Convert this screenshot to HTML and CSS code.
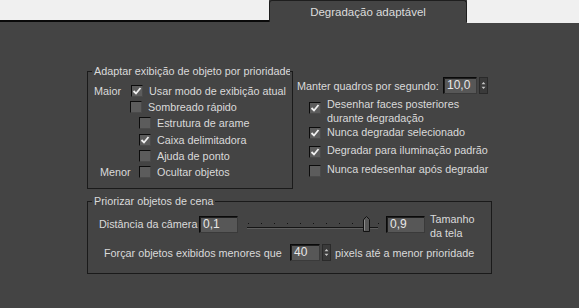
FILE: index.html
```html
<!DOCTYPE html>
<html lang="pt">
<head>
<meta charset="utf-8">
<link rel="stylesheet" href="styles.css">
</head>
<body>
<div class="tabbar">
  <div class="tab-left"></div>
  <div class="tab">Degradação adaptável</div>
  <div class="tab-right"></div>
</div>
<div class="content">
  <div class="top-row">
    <div class="group g1">
      <div class="legend legend1"><span>Adaptar exibição de objeto por prioridade</span></div>
      <div class="row r-first">
        <span class="side side-maior">Maior</span>
        <span class="cb on"><svg viewBox="0 0 12 12"><polyline points="2.5,6 5,8.5 9.5,3" /></svg></span>
        <span class="lbl">Usar modo de exibição atual</span>
      </div>
      <div class="row lvl1">
        <span class="cb"></span>
        <span class="lbl">Sombreado rápido</span>
      </div>
      <div class="row lvl2">
        <span class="cb"></span>
        <span class="lbl">Estrutura de arame</span>
      </div>
      <div class="row lvl2 r-gap">
        <span class="cb on"><svg viewBox="0 0 12 12"><polyline points="2.5,6 5,8.5 9.5,3" /></svg></span>
        <span class="lbl">Caixa delimitadora</span>
      </div>
      <div class="row lvl2">
        <span class="cb"></span>
        <span class="lbl">Ajuda de ponto</span>
      </div>
      <div class="row">
        <span class="side side-menor">Menor</span>
        <span class="cb"></span>
        <span class="lbl">Ocultar objetos</span>
      </div>
    </div>
    <div class="right-col">
      <div class="fps-row">
        <span class="fps-lbl">Manter quadros por segundo:</span>
        <span class="input fps-input">10,0</span>
        <span class="spin"><svg viewBox="0 0 9 17"><polygon points="4.5,4 7,7 2,7" /><polygon points="2,10 7,10 4.5,13" /></svg></span>
      </div>
      <div class="rcb rcb-two">
        <span class="cb on"><svg viewBox="0 0 12 12"><polyline points="2.5,6 5,8.5 9.5,3" /></svg></span>
        <span class="lbl">Desenhar faces posteriores<br>durante degradação</span>
      </div>
      <div class="rcb rcb-a">
        <span class="cb on"><svg viewBox="0 0 12 12"><polyline points="2.5,6 5,8.5 9.5,3" /></svg></span>
        <span class="lbl">Nunca degradar selecionado</span>
      </div>
      <div class="rcb rcb-b">
        <span class="cb on"><svg viewBox="0 0 12 12"><polyline points="2.5,6 5,8.5 9.5,3" /></svg></span>
        <span class="lbl">Degradar para iluminação padrão</span>
      </div>
      <div class="rcb rcb-b">
        <span class="cb"></span>
        <span class="lbl">Nunca redesenhar após degradar</span>
      </div>
    </div>
  </div>
  <div class="group g2">
    <div class="legend legend2"><span>Priorizar objetos de cena</span></div>
    <div class="cam-row">
      <span class="cam-lbl">Distância da câmera</span>
      <span class="input cam-input">0,1</span>
      <svg class="slider" width="142" height="17" viewBox="0 0 142 17">
        <g fill="#111">
          <rect x="7" y="7" width="1" height="1"/>
          <rect x="20" y="7" width="1" height="1"/>
          <rect x="33" y="7" width="1" height="1"/>
          <rect x="46" y="7" width="1" height="1"/>
          <rect x="59" y="7" width="1" height="1"/>
          <rect x="72" y="7" width="1" height="1"/>
          <rect x="85" y="7" width="1" height="1"/>
          <rect x="98" y="7" width="1" height="1"/>
          <rect x="111" y="7" width="1" height="1"/>
          <rect x="137" y="7" width="1" height="1"/>
        </g>
        <rect x="6" y="11" width="131" height="1" fill="#151515"/>
        <rect x="6" y="12" width="131" height="1" fill="#5e5e5e"/>
        <polygon points="122.5,3.5 125.5,0.5 128.5,3.5 128.5,15.5 122.5,15.5" fill="#565656" stroke="#111" stroke-width="1"/>
        <line x1="123.5" y1="4" x2="123.5" y2="14.5" stroke="#8a8a8a" stroke-width="1"/>
      </svg>
      <span class="input cam-input">0,9</span>
      <span class="tam-lbl">Tamanho<br>da tela</span>
    </div>
    <div class="force-row">
      <span class="force-lbl">Forçar objetos exibidos menores que</span>
      <span class="input px-input">40</span>
      <span class="spin"><svg viewBox="0 0 9 17"><polygon points="4.5,4 7,7 2,7" /><polygon points="2,10 7,10 4.5,13" /></svg></span>
      <span class="px-lbl">pixels até a menor prioridade</span>
    </div>
  </div>
</div>
</body>
</html>
```

FILE: styles.css
```css
* { box-sizing: border-box; }
html, body {
  margin: 0;
  padding: 0;
  background: #444444;
  width: 579px;
  height: 308px;
  overflow: hidden;
  font-family: "Liberation Sans", Arial, sans-serif;
  font-size: 10.8px;
  color: #dadada;
}
.tabbar {
  display: flex;
  height: 22px;
}
.tab-left {
  width: 269px;
  height: 22px;
  background: #f0f0f0;
  border-bottom: 2px solid #0a0a0a;
}
.tab {
  width: 198px;
  height: 22px;
  background: #444444;
  border: 1px solid #1e1e1e;
  border-bottom: none;
  border-radius: 3px 3px 0 0;
  text-align: center;
  line-height: 22px;
  font-size: 11.5px;
  color: #dcdcdc;
}
.tab-right {
  flex: 1;
  height: 23px;
  background: #f0f0f0;
}
.content {
  padding-left: 87px;
}
.top-row {
  display: flex;
  margin-top: 49px;
}
.group {
  border: 1px solid #1a1a1a;
}
.g1 {
  width: 206px;
  height: 118px;
}
.legend {
  height: 13px;
  line-height: 13px;
  margin-top: -7px;
  margin-left: 4px;
  padding: 0 2px;
  background: #444444;
  white-space: nowrap;
  overflow: hidden;
}
.legend1 { width: 198px; }
.legend2 { width: fit-content; }
.row {
  display: flex;
  align-items: center;
  height: 16px;
}
.r-first { margin-top: 5px; }
.r-gap { margin-top: 1px; }
.side {
  display: inline-block;
}
.side-maior { width: 43px; padding-left: 6px; }
.side-menor { width: 51px; padding-left: 12px; }
.lvl1 { padding-left: 42px; }
.lvl2 { padding-left: 51px; }
.cb {
  flex: none;
  display: inline-block;
  width: 12px;
  height: 12px;
  background: #5c5c5c;
  border-top: 1px solid #0c0c0c;
  border-left: 1px solid #0c0c0c;
  border-right: 1px solid #4a4a4a;
  border-bottom: 1px solid #4a4a4a;
  position: relative;
}
.cb svg {
  position: absolute;
  left: -1px;
  top: -1px;
  width: 12px;
  height: 12px;
}
.cb svg polyline {
  fill: none;
  stroke: #f0f0f0;
  stroke-width: 1.8;
}
.lbl {
  margin-left: 6px;
  white-space: nowrap;
}
.right-col {
  padding-left: 4px;
  padding-top: 6px;
}
.fps-row {
  display: flex;
  align-items: center;
  height: 17px;
}
.fps-lbl { width: 146px; white-space: nowrap; }
.input {
  display: inline-block;
  height: 17px;
  line-height: 15px;
  background: #575757;
  border-top: 1px solid #0a0a0a;
  border-left: 1px solid #0a0a0a;
  border-right: 1px solid #3a3a3a;
  border-bottom: 1px solid #3a3a3a;
  box-shadow: inset 1px 1px 0 #1e1e1e;
  padding-left: 3px;
  color: #e8e8e8;
  font-size: 12px;
}
.fps-input { width: 34px; }
.spin {
  display: inline-block;
  width: 9px;
  height: 17px;
  margin-left: 2px;
  background: #3a3a3a;
  border: 1px solid #2a2a2a;
}
.spin svg {
  display: block;
  width: 7px;
  height: 15px;
}
.spin svg polygon { fill: #c8c8c8; }
.rcb {
  display: flex;
  align-items: flex-start;
  padding-left: 12px;
  line-height: 14px;
}
.rcb .cb { margin-top: 2px; }
.rcb-two { margin-top: 3px; }
.rcb-two .cb { margin-top: 5px; }
.rcb-a { margin-top: 0; }
.rcb-b { margin-top: 4px; }
.rcb-b .cb { margin-top: 3px; }
.g2 {
  width: 405px;
  height: 73px;
  margin-top: 12px;
}
.cam-row {
  display: flex;
  align-items: flex-start;
  margin-top: 4px;
  padding-left: 11px;
}
.cam-lbl {
  width: 100px;
  margin-top: 4px;
  line-height: 17px;
  white-space: nowrap;
}
.cam-input {
  width: 39px;
  margin-top: 4px;
}
.slider {
  display: block;
  margin: 4px 3px 0 3px;
}
.tam-lbl {
  margin-left: 5px;
  line-height: 14px;
}
.force-row {
  display: flex;
  align-items: center;
  margin-top: 4px;
  padding-left: 16px;
  height: 17px;
}
.force-lbl { width: 186px; white-space: nowrap; }
.px-input { width: 30px; }
.px-lbl { margin-left: 4px; white-space: nowrap; }
```
